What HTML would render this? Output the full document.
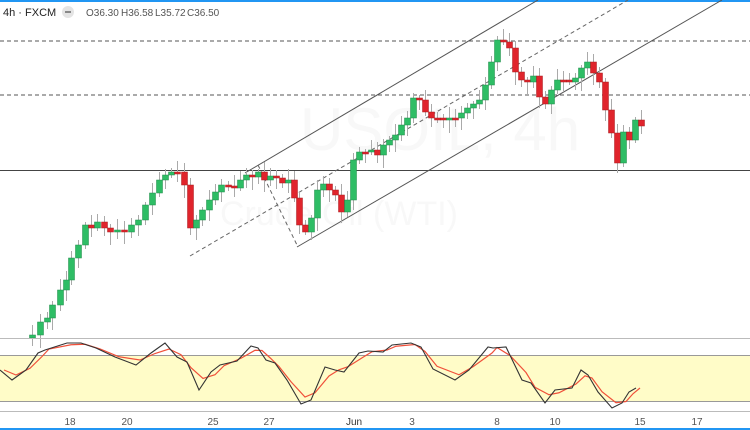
<!DOCTYPE html>
<html><head><meta charset="utf-8"><style>
html,body{margin:0;padding:0;background:#fff;}
body{width:750px;height:430px;overflow:hidden;position:relative;font-family:"Liberation Sans",sans-serif;}
svg{position:absolute;left:0;top:0;}
</style></head><body>
<svg id="s" width="750" height="430" viewBox="0 0 750 430" xmlns="http://www.w3.org/2000/svg">
<rect x="0" y="0" width="750" height="2" fill="#2196f3"/>
<rect x="0" y="428" width="750" height="2" fill="#2196f3"/>
<text x="300" y="150" font-size="60" fill="#f8f8f8" font-family="Liberation Sans">USOIL, 4h</text>
<text x="220" y="225" font-size="34" fill="#f8f8f8" font-family="Liberation Sans">Crude Oil (WTI)</text>
<line x1="0" y1="41" x2="750" y2="41" stroke="#555" stroke-dasharray="4,3"/>
<line x1="0" y1="95" x2="750" y2="95" stroke="#555" stroke-dasharray="4,3"/>
<line x1="0" y1="170.5" x2="750" y2="170.5" stroke="#444"/>
<line x1="245" y1="173" x2="538" y2="0" stroke="#555"/>
<line x1="297" y1="247" x2="722" y2="0" stroke="#555"/>
<line x1="190" y1="256" x2="628" y2="0" stroke="#666" stroke-dasharray="4,3"/>
<line x1="258" y1="165" x2="297" y2="245" stroke="#666" stroke-dasharray="4,3"/>
<g id="c"></g>
<line x1="0" y1="338.5" x2="750" y2="338.5" stroke="#bbb"/>
<rect x="0" y="355" width="750" height="46" fill="#fffcc8"/>
<line x1="0" y1="355.5" x2="750" y2="355.5" stroke="#999"/>
<line x1="0" y1="401.5" x2="750" y2="401.5" stroke="#999"/>
<polyline id="rl" fill="none" stroke="#f0503a" stroke-width="1.2"/>
<polyline id="bl" fill="none" stroke="#333" stroke-width="1.1"/>
<line x1="0" y1="411.5" x2="750" y2="411.5" stroke="#bbb"/>
<g font-size="10" fill="#555" text-anchor="middle">
<text x="70" y="425">18</text><text x="127" y="425">20</text><text x="213" y="425">25</text><text x="269" y="425">27</text><text x="354" y="425" fill="#333">Jun</text><text x="412" y="425">3</text><text x="497" y="425">8</text><text x="555" y="425">10</text><text x="640" y="425">15</text><text x="697" y="425">17</text>
</g>
<text x="3" y="16" font-size="11" fill="#222">4h · FXCM</text>
<circle cx="68" cy="12" r="6" fill="#e4e4e4"/><rect x="65" y="11" width="6" height="2" fill="#888"/>
<g font-size="10" fill="#555"><text x="86" y="16">O36.30</text><text x="121" y="16">H36.58</text><text x="155" y="16">L35.72</text><text x="187" y="16">C36.50</text></g>
</svg>
<script>
var cl=[[25,338],[32,335],[40,322],[47,318],[52,305],[60,290],[66,280],[71,258],[78,245],[85,225],[91,228],[97,222],[104,228],[110,232],[117,230],[124,232],[131,225],[138,220],[145,205],[152,193],[159,180],[165,175],[171,172],[177,172],[184,185],[190,228],[196,220],[202,210],[209,200],[215,192],[221,185],[228,186],[234,188],[240,180],[246,175],[252,177],[258,172],[264,180],[270,176],[276,178],[282,183],[288,180],[294,198],[299,225],[305,232],[311,218],[317,190],[323,184],[329,190],[335,195],[341,212],[347,200],[353,160],[359,152],[365,152],[371,150],[377,155],[383,145],[389,140],[395,135],[401,125],[407,118],[413,98],[419,100],[425,112],[431,118],[437,118],[443,120],[449,118],[455,118],[461,113],[467,108],[473,104],[479,100],[485,85],[491,62],[497,40],[503,42],[509,48],[515,72],[521,80],[527,82],[533,76],[539,97],[545,104],[551,90],[557,80],[563,80],[569,82],[575,78],[581,68],[587,62],[593,73],[599,82],[605,110],[611,133],[617,163],[623,132],[629,140],[635,120],[641,126]];
var g=document.getElementById('c'),h='';
for(var i=1;i<cl.length;i++){var x=cl[i][0],o=cl[i-1][1],c=cl[i][1];var up=c<o;var t=Math.min(o,c),b=Math.max(o,c);if(b-t<2){b=t+2;}
var hi=t-3-(i*7%9),lo=b+3+(i*5%11);
h+='<line x1="'+(x+.5)+'" y1="'+hi+'" x2="'+(x+.5)+'" y2="'+lo+'" stroke="#aaa"/>';
h+='<rect x="'+(x-2.5)+'" y="'+t+'" width="6" height="'+(b-t)+'" fill="'+(up?'#2ebd65':'#e0242c')+'" stroke="'+(up?'#1e8a48':'#a81a1f')+'" stroke-width="0.5"/>';}
g.innerHTML=h;
var p=[[0,370],[12,380],[26,370],[38,353],[45,350],[67,343],[81,343],[96,348],[115,357],[136,365],[151,353],[165,343],[177,357],[187,362],[199,390],[211,372],[220,365],[237,361],[251,346],[258,348],[266,360],[275,363],[287,380],[301,404],[311,400],[325,367],[335,370],[344,372],[359,353],[368,351],[383,352],[392,345],[411,343],[421,347],[433,369],[455,380],[469,370],[488,347],[493,348],[506,347],[522,380],[531,383],[545,403],[555,390],[572,388],[581,370],[588,375],[598,392],[612,408],[622,403],[629,392],[636,388]];
document.getElementById('bl').setAttribute('points',p.map(function(a){return a[0]+','+a[1]}).join(' '));
document.getElementById('rl').setAttribute('points',p.map(function(a,i){var y=a[1];if(i>0&&i<p.length-1)y=(p[i-1][1]+2*a[1]+p[i+1][1])/4;return (a[0]+4)+','+y}).join(' '));
</script>
</body></html>
